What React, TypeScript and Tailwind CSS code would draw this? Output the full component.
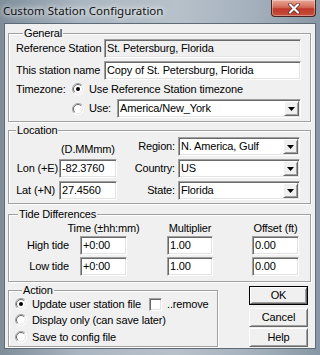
import React from "react";

// classic win32 3d edges
const sunken =
  "border border-t-[#a0a0a0] border-l-[#a0a0a0] border-b-white border-r-white shadow-[inset_1px_1px_0_#696969,inset_-1px_-1px_0_#e3e3e3]";
const raised =
  "border border-t-white border-l-white border-b-[#696969] border-r-[#696969] shadow-[inset_1px_1px_0_#f0f0f0,inset_-1px_-1px_0_#a0a0a0]";
const groupBox =
  "border border-[#a0a0a0] shadow-[inset_1px_1px_0_#fff,1px_1px_0_#fff]";

function TextBox({ value, gray, className = "" }: { value: string; gray?: boolean; className?: string }) {
  return (
    <div className={`h-[19px] flex items-center pl-[2px] ${gray ? "bg-[#f0f0f0]" : "bg-white"} ${sunken} ${className}`}>
      <span className="leading-none">{value}</span>
    </div>
  );
}

function Combo({ value, className = "" }: { value: string; className?: string }) {
  return (
    <div className={`h-[19px] flex items-stretch bg-white p-[1px] ${sunken} ${className}`}>
      <span className="flex-1 flex items-center pl-[1px] leading-none">{value}</span>
      <span className={`w-[15px] flex items-center justify-center bg-[#f0f0f0] ${raised}`}>
        <svg width="7" height="4" viewBox="0 0 7 4">
          <path d="M0 0h7L3.5 4z" fill="#000" />
        </svg>
      </span>
    </div>
  );
}

function Radio({ checked }: { checked?: boolean }) {
  return (
    <svg width="12" height="12" viewBox="0 0 12 12" className="shrink-0">
      <circle cx="6" cy="6" r="5.5" fill="#fff" />
      <path d="M2.1 9.9A5.5 5.5 0 0 1 9.9 2.1" stroke="#a0a0a0" fill="none" />
      <path d="M9.9 2.1A5.5 5.5 0 0 1 2.1 9.9" stroke="#fff" fill="none" />
      <path d="M2.8 9.2A4.5 4.5 0 0 1 9.2 2.8" stroke="#696969" fill="none" />
      <path d="M9.2 2.8A4.5 4.5 0 0 1 2.8 9.2" stroke="#e3e3e3" fill="none" />
      {checked && <circle cx="6" cy="6" r="2" fill="#000" />}
    </svg>
  );
}

function Button({ label, isDefault }: { label: string; isDefault?: boolean }) {
  return (
    <div className={`h-[19px] w-[59px] flex ${isDefault ? "border border-black" : ""}`}>
      <div className={`flex-1 flex items-center justify-center bg-[#f0f0f0] ${raised}`}>
        <span className="leading-none">{label}</span>
      </div>
    </div>
  );
}

function Legend({ children }: { children: React.ReactNode }) {
  return <legend className="ml-[7px] px-[1px] leading-[11px] bg-[#f0f0f0]">{children}</legend>;
}

export default function App() {
  return (
    <div className="w-[320px] h-[355px] flex flex-col overflow-hidden bg-[linear-gradient(90deg,#7f8d9b,#aab6c1_25%,#b7c1ca_55%,#a3b0bc_80%,#8897a5)]">
      {/* TITLE BAR */}
      <div className="h-[23px] shrink-0 flex items-start justify-between">
        <span className="ml-[3px] mt-[2px] font-['Noto_Sans',sans-serif] text-[11.5px] text-[#101010] [text-shadow:0_0_5px_#fff,0_0_8px_#fff]">
          Custom Station Configuration
        </span>
        <div className="mr-[4px] w-[45px] h-[17px] flex items-center justify-center rounded-b-[4px] border border-t-0 border-[#4a2320] bg-[linear-gradient(180deg,#e8a898,#d46c5a_45%,#c0392b_55%,#c4503c)] shadow-[inset_0_0_0_1px_rgba(255,255,255,0.35)]">
          <svg width="12" height="11" viewBox="0 0 12 11">
            <path d="M2 1.5l8 8M10 1.5l-8 8" stroke="#5a2420" strokeWidth="3.6" strokeLinecap="round" />
            <path d="M2 1.5l8 8M10 1.5l-8 8" stroke="#fff" strokeWidth="2.2" strokeLinecap="round" />
          </svg>
        </div>
      </div>

      {/* CLIENT */}
      <div className="mx-[4px] h-[326px] shrink-0 border border-[#5d6b79] bg-[#f0f0f0] text-black font-['Liberation_Sans',Arial,sans-serif] text-[11px] tracking-[-0.15px] whitespace-nowrap">
        {/* General */}
        <fieldset className={`ml-[3px] mt-[4px] w-[303px] pl-[7px] pr-[9px] pb-[3px] ${groupBox}`}>
          <Legend>General</Legend>
          <div className="flex items-center h-[19px]">
            <span className="w-[88px] shrink-0">Reference Station</span>
            <TextBox value="St. Petersburg, Florida" gray className="flex-1" />
          </div>
          <div className="flex items-center h-[19px] mt-[3px]">
            <span className="w-[88px] shrink-0">This station name</span>
            <TextBox value="Copy of St. Petersburg, Florida" className="flex-1" />
          </div>
          <div className="flex items-center h-[16px] mt-[1px]">
            <span className="w-[56px]">Timezone:</span>
            <Radio checked />
            <span className="ml-[5px]">Use Reference Station timezone</span>
          </div>
          <div className="flex items-center h-[19px] mt-[2px]">
            <span className="w-[56px]" />
            <Radio />
            <span className="ml-[5px] w-[28px]">Use:</span>
            <Combo value="America/New_York" className="flex-1" />
          </div>
        </fieldset>

        {/* Location */}
        <fieldset className={`ml-[3px] mt-[3px] w-[303px] pb-[3px] ${groupBox}`}>
          <Legend>Location</Legend>
          <div className="pt-[1px] grid grid-cols-[49px_59px_58px_125px] auto-rows-[19px] gap-y-[3px] items-center">
            <span />
            <span className="ml-[1px] self-end text-center leading-[13px]">(D.MMmm)</span>
            <span className="text-right">Region:</span>
            <Combo value="N. America, Gulf" className="ml-[3px] w-[122px]" />

            <span className="text-right">Lon (+E)</span>
            <TextBox value="-82.3760" className="ml-[1px] w-[58px]" />
            <span className="text-right">Country:</span>
            <Combo value="US" className="ml-[3px] w-[122px]" />

            <span className="text-right pr-[3px]">Lat (+N)</span>
            <TextBox value="27.4560" className="ml-[1px] w-[58px]" />
            <span className="text-right">State:</span>
            <Combo value="Florida" className="ml-[3px] w-[122px]" />
          </div>
        </fieldset>

        {/* Tide Differences */}
        <fieldset className={`ml-[3px] mt-[5px] w-[303px] pb-[5px] ${groupBox}`}>
          <legend className="ml-[9px] px-[1px] leading-[11px] bg-[#f0f0f0]">Tide Differences</legend>
          <div className="flex items-center h-[14px] mt-[1px]">
            <span className="w-[60px]" />
            <span className="ml-[11px] w-[47px] flex justify-center">Time (±hh:mm)</span>
            <span className="ml-[40px] w-[46px] flex justify-center">Multiplier</span>
            <span className="ml-[39px] w-[47px] flex justify-center">Offset (ft)</span>
          </div>
          <div className="flex items-center h-[19px] mt-[1px]">
            <span className="w-[60px] text-right">High tide</span>
            <TextBox value="+0:00" className="ml-[11px] w-[47px]" />
            <TextBox value="1.00" className="ml-[40px] w-[46px]" />
            <TextBox value="0.00" className="ml-[39px] w-[47px]" />
          </div>
          <div className="flex items-center h-[19px] mt-[2px]">
            <span className="w-[60px] text-right">Low tide</span>
            <TextBox value="+0:00" className="ml-[11px] w-[47px]" />
            <TextBox value="1.00" className="ml-[40px] w-[46px]" />
            <TextBox value="0.00" className="ml-[39px] w-[47px]" />
          </div>
        </fieldset>

        {/* Action + buttons */}
        <div className="flex items-start">
          <fieldset className={`ml-[3px] mt-[3px] w-[210px] pl-[6px] pb-[1px] ${groupBox}`}>
            <Legend>Action</Legend>
            <div className="flex items-center h-[16px]">
              <Radio checked />
              <span className="ml-[5px] w-[117px]">Update user station file</span>
              <span className={`w-[13px] h-[13px] bg-white ${sunken}`} />
              <span className="ml-[5px]">..remove</span>
            </div>
            <div className="flex items-center h-[16px]">
              <Radio />
              <span className="ml-[5px]">Display only (can save later)</span>
            </div>
            <div className="flex items-center h-[16px] mt-[1px]">
              <Radio />
              <span className="ml-[5px]">Save to config file</span>
            </div>
          </fieldset>
          <div className="ml-[31px] mt-[4px] flex flex-col gap-[1px]">
            <Button label="OK" isDefault />
            <div className="h-[1px]" />
            <Button label="Cancel" />
            <Button label="Help" />
          </div>
        </div>
      </div>
    </div>
  );
}
